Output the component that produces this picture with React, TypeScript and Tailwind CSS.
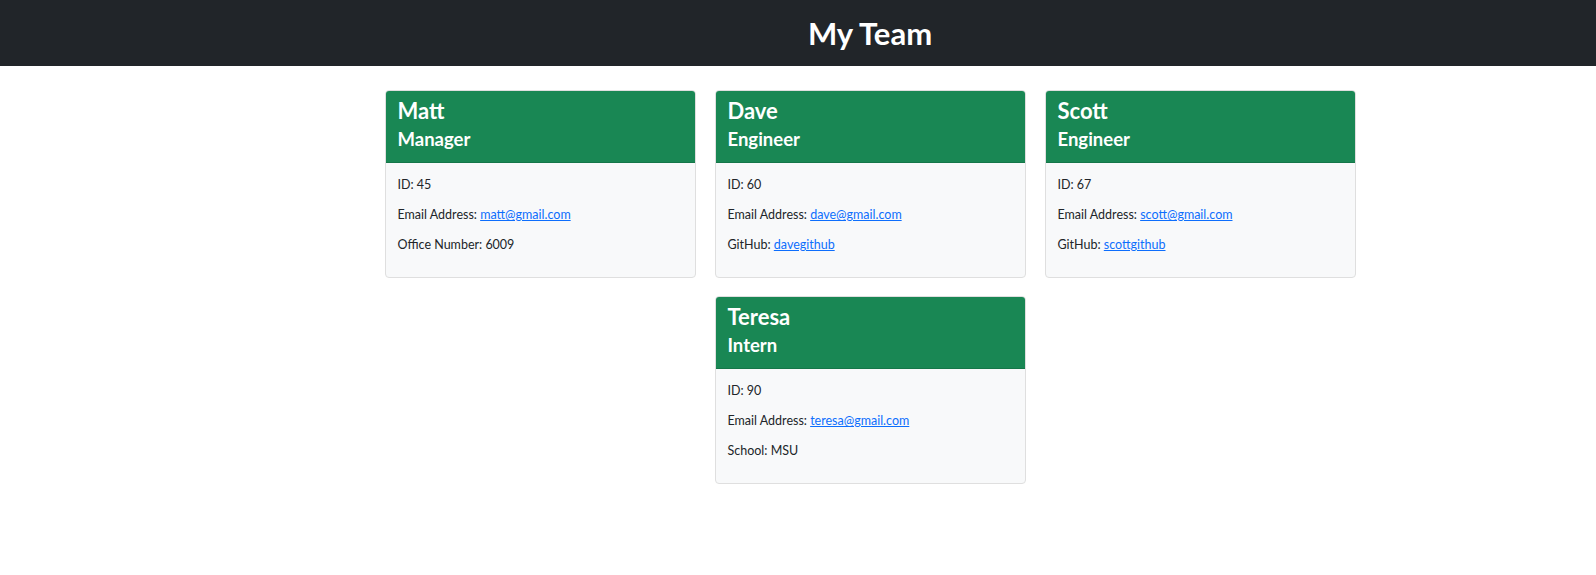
type Member = {
  name: string;
  role: string;
  id: number;
  email: string;
  extra: { label: string; value: string; link?: boolean };
};

const team: Member[] = [
  { name: "Matt", role: "Manager", id: 45, email: "matt@gmail.com", extra: { label: "Office Number", value: "6009" } },
  { name: "Dave", role: "Engineer", id: 60, email: "dave@gmail.com", extra: { label: "GitHub", value: "davegithub", link: true } },
  { name: "Scott", role: "Engineer", id: 67, email: "scott@gmail.com", extra: { label: "GitHub", value: "scottgithub", link: true } },
  { name: "Teresa", role: "Intern", id: 90, email: "teresa@gmail.com", extra: { label: "School", value: "MSU" } },
];

function MemberCard({ m }: { m: Member }) {
  return (
    <div className="w-[311px] rounded-[4px] border border-[#dfdfdf] overflow-hidden bg-[#f8f9fa]">
      <div className="bg-[#198754] text-white px-3 pt-[7px] pb-[11px] border-b border-black/[0.125]">
        <h2 className="text-[22px] leading-[26px] font-bold mb-[3px]">{m.name}</h2>
        <h3 className="text-[18.5px] leading-6 font-bold">{m.role}</h3>
      </div>
      <div className="px-3 pt-[12px] pb-[12px] text-[12.5px] text-[#212529]">
        <p className="leading-5 mb-[10px]">ID: {m.id}</p>
        <p className="leading-5 mb-[10px]">
          Email Address:{" "}
          <a href={`mailto:${m.email}`} className="text-[#0d6efd] underline">
            {m.email}
          </a>
        </p>
        <p className="leading-5 mb-[10px]">
          {m.extra.label}:{" "}
          {m.extra.link ? (
            <a href="#" className="text-[#0d6efd] underline">
              {m.extra.value}
            </a>
          ) : (
            m.extra.value
          )}
        </p>
      </div>
    </div>
  );
}

export default function App() {
  return (
    <div className="min-h-screen bg-white font-['Lato',sans-serif]">
      {/* Header */}
      <header className="h-[66px] bg-[#212529] pl-[144px] flex items-center justify-center">
        <h1 className="text-white text-[31px] leading-10 font-bold">My Team</h1>
      </header>

      {/* Team cards */}
      <main className="pl-[144px] pt-[24px]">
        <div className="mx-auto w-[971px] flex flex-wrap justify-center gap-x-[19px] gap-y-[18px]">
          {team.map((m) => (
            <MemberCard key={m.name} m={m} />
          ))}
        </div>
      </main>
    </div>
  );
}
